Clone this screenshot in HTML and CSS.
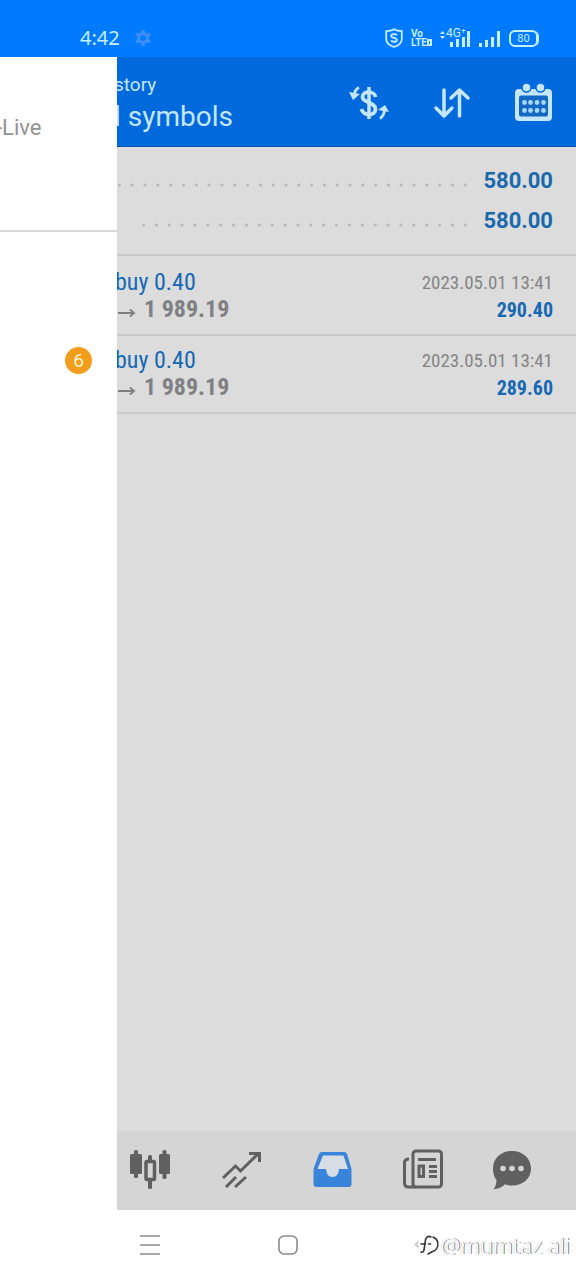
FILE: index.html
```html
<!DOCTYPE html>
<html lang="en">
<head>
<meta charset="utf-8">
<meta name="viewport" content="width=device-width, initial-scale=1">
<title>History</title>
<link rel="stylesheet" href="styles.css">
</head>
<body>
<div class="status">
  <span class="clock">4:42</span>
  <svg class="gear" width="18" height="18" viewBox="0 0 18 18"><circle cx="9" cy="9" r="4.4" fill="none" stroke="currentColor" stroke-width="3.2"/><g stroke="currentColor" stroke-width="3.4"><path d="M9 1v3M9 14v3M2.1 5l2.6 1.5M13.3 11.5l2.6 1.5M2.1 13l2.6-1.5M13.3 6.5L15.900 5"/></g></svg>
  <div class="signals">
    <svg width="18" height="20" viewBox="0 0 18 20" fill="none" stroke="currentColor" stroke-width="1.8"><path d="M9 1.200C6.500 2.600 4 3 1.200 3.200V11c0 4 3 6.500 7.800 8 4.800-1.500 7.800-4 7.800-8V3.200C14 3 11.500 2.600 9 1.200z"/><path d="M12 7.200C11 5.900 6.200 5.600 6.200 8c0 2.400 5.700 1.400 5.700 4 0 2.300-4.800 2.200-5.900.6"/></svg>
    <span class="volte"><span>Vo</span><span>LTE<b></b></span></span>
    <span class="net">
      <svg width="31" height="18" viewBox="0 0 31 18"><g fill="currentColor"><path d="M0 5l2.500-3L5 5zM0 7l2.500 3L5 7z"/><rect x="10" y="13" width="3" height="5"/><rect x="16" y="10" width="3" height="8"/><rect x="22" y="8" width="3" height="10"/><rect x="27" y="2" width="3" height="16"/></g></svg>
      <span class="gen">4G⁺</span>
    </span>
    <svg width="22" height="18" viewBox="0 0 22 18" fill="currentColor"><rect x="0" y="14" width="3" height="4"/><rect x="6" y="11" width="3" height="7"/><rect x="12" y="8" width="3" height="10"/><rect x="18" y="2" width="3" height="16"/></svg>
    <span class="battery">80</span>
  </div>
</div>

<div class="app">
  <main class="page">
    <header class="topbar">
      <div class="titles">
        <div class="title">story</div>
        <div class="subtitle">l symbols</div>
      </div>
      <div class="actions">
        <button class="tool" aria-label="Currency"><svg width="40" height="40" viewBox="0 0 40 40" fill="none" stroke="currentColor" stroke-width="3"><path d="M20 4v32" stroke-width="3.500"/><path d="M26.500 14c-.5-6-13-7-13 0 0 6 13 5 13 12 0 8-12.500 7-14 0" stroke-width="3.800"/><path d="M10 4.500c-3 1.500-4.500 4-5 8M31 35.500c3-2 4-4.500 4.500-8" stroke-width="2.800"/><path d="M0 9l4 8 7-6zM40 29l-4-7-7 5z" fill="currentColor" stroke="none"/></svg></button>
        <button class="tool" aria-label="Sort"><svg width="40" height="40" viewBox="0 0 40 40" fill="none" stroke="currentColor" stroke-width="3.500" stroke-linecap="round" stroke-linejoin="round"><path d="M13 7v26M5 25l8 8 8-8M28.500 33V7M20 15l8.500-8 8.500 8"/></svg></button>
        <button class="tool" aria-label="Calendar"><svg width="40" height="40" viewBox="0 0 40 40"><rect x="2" y="6" width="37" height="32" rx="4" fill="currentColor"/><g fill="currentColor" stroke="#0069dc" stroke-width="1.500"><circle cx="13.500" cy="4.500" r="4.500"/><circle cx="27.500" cy="4.500" r="4.500"/></g><rect x="6" y="12.500" width="29" height="21" rx="2" fill="#1467c2"/><g fill="#a6d8ff"><circle cx="11.500" cy="19.500" r="2.400"/><circle cx="17.500" cy="19.500" r="2.400"/><circle cx="24" cy="19.500" r="2.400"/><circle cx="30.500" cy="19.500" r="2.400"/><circle cx="11.500" cy="27.500" r="2.400"/><circle cx="17.500" cy="27.500" r="2.400"/><circle cx="24" cy="27.500" r="2.400"/><circle cx="30.500" cy="27.500" r="2.400"/></g></svg></button>
      </div>
    </header>

    <section class="summary">
      <div class="line"><span class="dots"></span><span class="total">580.00</span></div>
      <div class="line line-short"><span class="dots"></span><span class="total">580.00</span></div>
    </section>

    <section class="deals">
      <article class="deal">
        <div><div class="order">buy 0.40</div><div class="price"><svg class="arrow" width="18" height="10" viewBox="0 0 18 10"><path d="M0 5h15M12 1.500L16 5l-4 3.500" fill="none" stroke="currentColor" stroke-width="1.800"/></svg>1 989.19</div></div>
        <div class="right"><div class="time">2023.05.01 13:41</div><div class="profit">290.40</div></div>
      </article>
      <article class="deal">
        <div><div class="order">buy 0.40</div><div class="price"><svg class="arrow" width="18" height="10" viewBox="0 0 18 10"><path d="M0 5h15M12 1.500L16 5l-4 3.500" fill="none" stroke="currentColor" stroke-width="1.800"/></svg>1 989.19</div></div>
        <div class="right"><div class="time">2023.05.01 13:41</div><div class="profit">289.60</div></div>
      </article>
    </section>

    <nav class="tabs">
      <button class="tab" aria-label="Quotes"><svg width="42" height="42" viewBox="0 0 42 42" fill="currentColor"><rect x="1" y="5" width="12" height="20" rx="1.500"/><rect x="5" y="1" width="4" height="28" rx="1.500"/><rect x="30" y="5" width="11" height="20" rx="1.500"/><rect x="33.500" y="1" width="4" height="29" rx="1.500"/><rect x="19" y="6" width="4" height="6" rx="1.500"/><rect x="19" y="30" width="4" height="10" rx="1.500"/><rect x="17" y="12.500" width="8.500" height="18" rx="1" fill="none" stroke="currentColor" stroke-width="3.500"/></svg></button>
      <button class="tab" aria-label="Chart"><svg width="42" height="42" viewBox="0 0 42 42" fill="none" stroke="currentColor" stroke-width="3"><path d="M3 29l12.500-12 5 5L39 4M29 4.500h10.500V13M6 38l10-10M15 38l11-10"/></svg></button>
      <button class="tab tab-on" aria-label="Trade"><svg width="42" height="42" viewBox="0 0 42 42"><path d="M11 3h22c1.500 0 2.500.8 3 2l4.500 15v15c0 2-1 3-3 3h-32c-2 0-3-1-3-3V20L8 5c.5-1.200 1.500-2 3-2z" fill="currentColor"/><path d="M12 6.500h20.500L37 20h-9c-.5 5-2.500 8-6.500 8s-6-3-6.500-8H6.500z" fill="#d7dde4"/></svg></button>
      <button class="tab" aria-label="News"><svg width="42" height="42" viewBox="0 0 42 42" fill="none" stroke="currentColor" stroke-width="3"><rect x="12" y="2" width="28.500" height="36" rx="3"/><path d="M8 10c-3 0-4.500 1-4.500 4v20c0 2.500 1.500 4 4 4H15M17 10.500h18M28 17.500h8M28 22.500h8M28 27.500h8"/><rect x="18" y="17" width="4.500" height="10.500"/></svg></button>
      <button class="tab" aria-label="Messages"><svg width="42" height="42" viewBox="0 0 42 42"><path d="M20 2c11 0 19 7.500 19 17.500s-8 17-19 17c-3 0-5-.4-7-1.200-3 3-6.500 4.700-11.500 5 2-2.800 3-5.800 3-9.300C2 28 1 24 1 19.500 1 9.500 9 2 20 2z" fill="currentColor"/><g fill="#d5d5d5"><circle cx="11" cy="19.500" r="2.800"/><circle cx="20" cy="19.500" r="2.800"/><circle cx="29" cy="19.500" r="2.800"/></g></svg></button>
    </nav>
  </main>

  <aside class="drawer">
    <div class="account">-Live</div>
    <div class="menu"><span class="badge">6</span></div>
  </aside>
</div>

<footer class="sysnav">
  <button class="sys" aria-label="Recent"><svg width="22" height="22" viewBox="0 0 22 22" stroke="currentColor" stroke-width="1.600"><path d="M1 2h20M1 11h20M1 20h20"/></svg></button>
  <button class="sys" aria-label="Home"><svg width="22" height="22" viewBox="0 0 22 22" fill="none" stroke="currentColor" stroke-width="1.600"><rect x="2" y="2" width="18" height="18" rx="5"/></svg></button>
  <div class="mark"><svg width="26" height="24" viewBox="0 0 26 24" fill="none" stroke-linecap="round"><path d="M4 9L1.500 11.500 4 14" stroke="#b0b0b0" stroke-width="1.200"/><path d="M17 4c-3-1.500-5 0-5.500 3L10 17c-.4 2-1.500 2.500-3 2" stroke="#333" stroke-width="1.600"/><path d="M7 11h4.500M14.500 11h2M19 4c5 2 6 7 4 11-1 2-2.500 3-4.500 3.500L14 21" stroke="#333" stroke-width="1.500"/></svg><span>@mumtaz ali</span></div>
</footer>
</body>
</html>
```
FILE: styles.css
```css
* { box-sizing: border-box; }
body {
  margin: 0;
  min-height: 100vh;
  display: flex;
  flex-direction: column;
  background: #fff;
  font-family: Roboto, "Liberation Sans", sans-serif;
}
button { border: 0; padding: 0; background: none; color: inherit; display: flex; }
svg { display: block; flex: none; }

.status {
  height: 57px;
  padding: 19px 36px 0 80px;
  display: flex;
  align-items: center;
  background: #007bff;
  color: #c6f0ff;
}
.clock { font: 20px/24px "Noto Sans", sans-serif; }
.gear { margin-left: 14px; color: #3c8df5; }
.signals { margin-left: auto; display: flex; align-items: center; gap: 8px; }
.volte { display: flex; flex-direction: column; font: bold 10px/9px Roboto, sans-serif; }
.volte b { display: inline-block; width: 5px; height: 7px; border: 2px solid; }
.net { position: relative; }
.gen { position: absolute; left: 6px; top: -2px; font-size: 12px; line-height: 12px; }
.battery {
  width: 29px;
  margin-right: 2px;
  border: 2px solid;
  border-radius: 6px;
  font-size: 11px;
  line-height: 13px;
  text-align: center;
  box-shadow: 2px 0 0 -1px #c6f0ff;
}

.app { position: relative; flex: 1; display: flex; }
.page { flex: 1; min-width: 0; display: flex; flex-direction: column; background: #dcdcdc; }
.topbar {
  height: 90px;
  padding: 2px 23px 0 114px;
  display: flex;
  align-items: center;
  justify-content: space-between;
  background: #0069dc;
  border-bottom: 1px solid #0756ae;
  color: #c4e6ff;
}
.title { font-size: 19px; line-height: 28px; }
.subtitle { font-size: 28px; line-height: 36px; }
.actions { display: flex; gap: 42px; }

.summary { padding: 14px 23px 13px 113px; border-bottom: 2px solid #c9c9c9; }
.line { height: 40px; display: flex; align-items: center; gap: 12px; }
.line-short { padding-left: 24px; }
.dots {
  flex: 1;
  height: 4px;
  margin-top: 8px;
  background: radial-gradient(circle, #b8b8b8 1px, transparent 2px) 0 0 / 13px 4px round;
}
.total { font-size: 22px; line-height: 28px; font-weight: 700; color: #1a68ad; }

.deal {
  padding: 11px 23px 10px 115px;
  display: flex;
  justify-content: space-between;
  border-bottom: 2px solid #c9c9c9;
  font-family: "Roboto Condensed", Roboto, "Liberation Sans", sans-serif;
}
.deals { padding-top: 2px; }
.order { font-size: 24px; line-height: 27px; color: #1768b4; }
.price { display: flex; align-items: center; font-size: 24px; line-height: 27px; font-weight: 700; color: #808084; }
.arrow { margin: 6px 8px 0 3px; }
.right { text-align: right; }
.time { font-size: 19px; line-height: 28px; color: #858585; }
.profit { font-size: 20px; line-height: 27px; font-weight: 700; color: #1768b4; }

.tabs {
  height: 79px;
  margin-top: auto;
  padding: 0 42px 2px 129px;
  display: flex;
  align-items: center;
  justify-content: space-between;
  background: #d5d5d5;
  color: #606060;
}
.tab-on { color: #3984db; }

.drawer { position: absolute; inset: 0 auto 0 0; width: 117px; background: #fff; }
.account {
  height: 175px;
  padding-top: 57px;
  border-bottom: 2px solid #d8d8d8;
  font-size: 22px;
  line-height: 28px;
  color: #929292;
  text-indent: -4px;
}
.menu { display: flex; justify-content: flex-end; padding: 115px 25px 0 0; }
.badge {
  width: 27px;
  border-radius: 50%;
  background: #f39d1c;
  color: #fff3d0;
  font-size: 19px;
  line-height: 27px;
  text-align: center;
}

.sysnav {
  height: 70px;
  padding: 0 6px 0 139px;
  display: flex;
  align-items: center;
  color: #8a8a8a;
}
.sys + .sys { margin-left: 116px; }
.mark { margin-left: auto; display: flex; align-items: center; gap: 1px; }
.mark span {
  font: 300 22px/30px "Noto Sans", sans-serif;
  color: #fff;
  text-shadow: 1px 0 0 #777, -1px 0 1px #ddd;
}
```
